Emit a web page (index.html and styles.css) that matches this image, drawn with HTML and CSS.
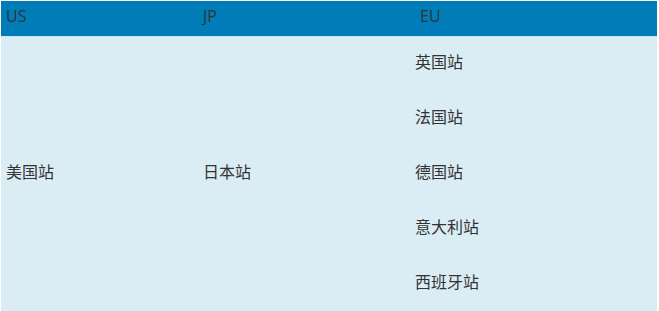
FILE: index.html
```html
<!DOCTYPE html>
<html lang="zh-CN">
<head>
<meta charset="utf-8">
<link rel="stylesheet" href="styles.css">
<title>站点</title>
</head>
<body>
<table class="sites">
  <colgroup>
    <col class="c1">
    <col class="c2">
    <col class="c3">
  </colgroup>
  <thead>
    <tr class="head">
      <th>US</th>
      <th>JP</th>
      <th class="eu">EU</th>
    </tr>
  </thead>
  <tbody>
    <tr>
      <td rowspan="5">美国站</td>
      <td rowspan="5">日本站</td>
      <td>英国站</td>
    </tr>
    <tr><td>法国站</td></tr>
    <tr><td>德国站</td></tr>
    <tr><td>意大利站</td></tr>
    <tr><td>西班牙站</td></tr>
  </tbody>
</table>
</body>
</html>
```

FILE: styles.css
```css
html, body {
  margin: 0;
  padding: 0;
  background: #ffffff;
}

.sites {
  margin: 1px 0 0 1px;
  width: 656px;
  border-collapse: collapse;
  table-layout: fixed;
  font-family: "Open Sans", "Noto Sans CJK SC", sans-serif;
  font-size: 16px;
  color: #333333;
}

.c1 { width: 197px; }
.c2 { width: 212px; }
.c3 { width: 247px; }

.sites th,
.sites td {
  box-sizing: border-box;
  padding: 0 0 5px 5px;
  text-align: left;
  font-weight: normal;
  vertical-align: middle;
}

.head {
  background: #007db8;
  height: 35px;
}

.head th {
  padding-bottom: 4px;
  border-bottom: 1px solid #cfe6f0;
}

.sites tbody td {
  background: #daedf5;
  height: 55px;
}

.sites .eu { padding-left: 10px; }
```
